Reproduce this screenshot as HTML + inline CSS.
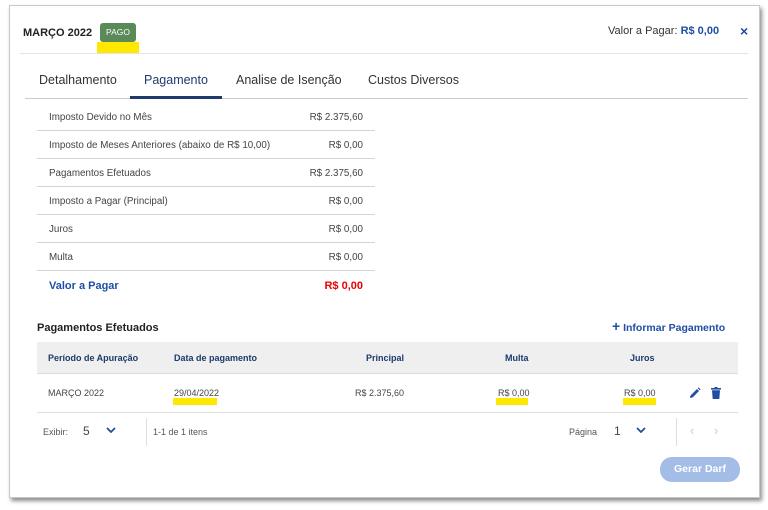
<!DOCTYPE html><html><head><meta charset="utf-8"><style>
*{margin:0;padding:0;box-sizing:border-box}
body{width:768px;height:510px;background:#fff;font-family:"Liberation Sans",Arial,sans-serif;position:relative;overflow:hidden;color:#333}
.frame{position:absolute;left:9px;top:5px;width:751px;height:493px;border:1px solid #c8c8c8;box-shadow:2px 3px 4px rgba(0,0,0,.45);background:#fff}
.a{position:absolute;white-space:nowrap}
.row{position:absolute;left:37px;width:338px;height:28px;border-bottom:1px solid #d4d4d4;font-size:9.8px;color:#444}
.row span{position:absolute;top:9px}
.row .v{right:12px}
.row .l{left:12px}
.th{font-size:9px;font-weight:bold;color:#1d3a6c}
.td{font-size:9px;color:#444}
.hl{position:absolute;height:7px;background:#ffe800}
</style></head><body>
<div class="frame"></div>
<div class="a" style="left:23px;top:27px;font-size:11px;font-weight:bold;color:#222">MARÇO 2022</div>
<div class="a" style="left:100px;top:23px;width:36px;height:19px;background:#5a8a58;border-radius:3px;color:#fff;font-size:8.5px;text-align:center;line-height:19px">PAGO</div>
<div class="hl" style="left:97px;top:42px;width:42px;height:11px"></div>
<div class="a" style="left:608px;top:25px;font-size:11px;color:#333">Valor a Pagar: <b style="color:#1f4ea3">R$ 0,00</b></div>
<div class="a" style="left:740px;top:23px;font-size:14px;font-weight:bold;color:#1f4ea3">×</div>
<div class="a" style="left:20px;top:53px;width:728px;height:1px;background:#e4e4e4"></div>
<div class="a" style="left:39px;top:73px;font-size:12.5px;color:#333">Detalhamento</div>
<div class="a" style="left:144px;top:73px;font-size:12.5px;color:#1f3a6c">Pagamento</div>
<div class="a" style="left:236px;top:73px;font-size:12.5px;color:#333">Analise de Isenção</div>
<div class="a" style="left:368px;top:73px;font-size:12.5px;color:#333">Custos Diversos</div>
<div class="a" style="left:25px;top:98px;width:723px;height:1px;background:#ccc"></div>
<div class="a" style="left:130px;top:96px;width:92px;height:3px;background:#1f3a6c"></div>
<div class="row" style="top:103px"><span class="l">Imposto Devido no Mês</span><span class="v">R$ 2.375,60</span></div>
<div class="row" style="top:131px"><span class="l">Imposto de Meses Anteriores (abaixo de R$ 10,00)</span><span class="v">R$ 0,00</span></div>
<div class="row" style="top:159px"><span class="l">Pagamentos Efetuados</span><span class="v">R$ 2.375,60</span></div>
<div class="row" style="top:187px"><span class="l">Imposto a Pagar (Principal)</span><span class="v">R$ 0,00</span></div>
<div class="row" style="top:215px"><span class="l">Juros</span><span class="v">R$ 0,00</span></div>
<div class="row" style="top:243px"><span class="l">Multa</span><span class="v">R$ 0,00</span></div>
<div class="row" style="top:271px;border:none;font-size:11px;font-weight:bold"><span class="l" style="color:#1f4ea3">Valor a Pagar</span><span class="v" style="color:#e00">R$ 0,00</span></div>
<div class="a" style="left:37px;top:322px;font-size:11px;font-weight:bold;color:#222">Pagamentos Efetuados</div>
<div class="a" style="left:612px;top:321px;font-size:10.5px;font-weight:bold;color:#1f4ea3"><span style="font-size:14px;line-height:10px">+</span> Informar Pagamento</div>
<div class="a" style="left:37px;top:342px;width:701px;height:32px;background:#efefef;border-bottom:1px solid #ddd"></div>
<div class="a th" style="left:48px;top:353px">Período de Apuração</div>
<div class="a th" style="left:174px;top:353px">Data de pagamento</div>
<div class="a th" style="left:366px;top:353px">Principal</div>
<div class="a th" style="left:505px;top:353px">Multa</div>
<div class="a th" style="left:630px;top:353px">Juros</div>
<div class="a td" style="left:48px;top:388px">MARÇO 2022</div>
<div class="a td" style="left:174px;top:388px">29/04/2022</div>
<div class="a td" style="left:355px;top:388px">R$ 2.375,60</div>
<div class="a td" style="left:498px;top:388px">R$ 0,00</div>
<div class="a td" style="left:624px;top:388px">R$ 0,00</div>
<div class="hl" style="left:173px;top:398px;width:44px"></div>
<div class="hl" style="left:496px;top:398px;width:32px"></div>
<div class="hl" style="left:623px;top:398px;width:33px"></div>
<svg class="a" style="left:689px;top:387px" width="12" height="12" viewBox="0 0 12 12"><path d="M1 11 L1.5 8.5 L8 2 L10 4 L3.5 10.5 Z M8.8 1.2 L9.6 0.4 L11.6 2.4 L10.8 3.2Z" fill="#1f4ea3"/></svg>
<svg class="a" style="left:711px;top:387px" width="10" height="12" viewBox="0 0 10 12"><rect x="0" y="1" width="10" height="1.6" fill="#1f4ea3"/><rect x="3.5" y="0" width="3" height="1.5" fill="#1f4ea3"/><path d="M1 3.2 H9 L8.3 12 H1.7Z" fill="#1f4ea3"/></svg>
<div class="a" style="left:37px;top:412px;width:701px;height:1px;background:#ddd"></div>
<div class="a" style="left:43px;top:427px;font-size:9px;color:#555">Exibir:</div>
<div class="a" style="left:83px;top:424px;font-size:12px;color:#444">5</div>
<svg class="a" style="left:106px;top:426px" width="10" height="8"><path d="M1 2 L5 6 L9 2" stroke="#1f4ea3" stroke-width="1.8" fill="none"/></svg>
<div class="a" style="left:146px;top:418px;width:1px;height:28px;background:#ddd"></div>
<div class="a" style="left:153px;top:427px;font-size:9px;color:#555">1-1 de 1 itens</div>
<div class="a" style="left:569px;top:427px;font-size:9px;color:#555">Página</div>
<div class="a" style="left:614px;top:424px;font-size:12px;color:#444">1</div>
<svg class="a" style="left:636px;top:426px" width="10" height="8"><path d="M1 2 L5 6 L9 2" stroke="#1f4ea3" stroke-width="1.8" fill="none"/></svg>
<div class="a" style="left:676px;top:418px;width:1px;height:28px;background:#ddd"></div>
<div class="a" style="left:690px;top:423px;font-size:13px;color:#ccc">‹</div>
<div class="a" style="left:714px;top:423px;font-size:13px;color:#ccc">›</div>
<div class="a" style="left:660px;top:457px;width:80px;height:25px;background:#a3bde6;border-radius:12px;color:#fff;font-size:10.5px;font-weight:bold;text-align:center;line-height:25px">Gerar Darf</div>
</body></html>
